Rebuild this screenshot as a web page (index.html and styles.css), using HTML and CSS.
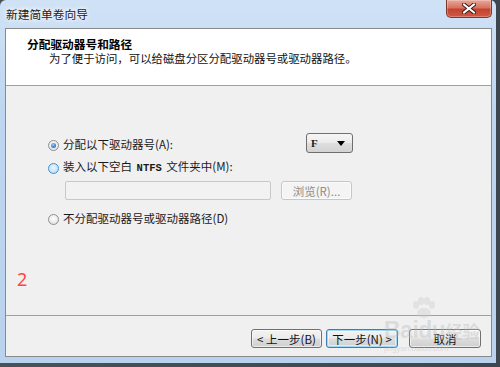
FILE: index.html
```html
<!DOCTYPE html>
<html lang="zh-CN">
<head>
<meta charset="utf-8">
<title>新建简单卷向导</title>
<link rel="stylesheet" href="styles.css">
</head>
<body>
<div class="window">
  <div class="titlebar">
    <span class="title">新建简单卷向导</span>
    <div class="close">
      <svg width="14" height="11" viewBox="0 0 14 11">
        <path d="M2 1.5 L12 9.5 M12 1.5 L2 9.5" stroke="#3a1b17" stroke-width="4" stroke-linecap="square"/>
        <path d="M2 1.5 L12 9.5 M12 1.5 L2 9.5" stroke="#ffffff" stroke-width="2" stroke-linecap="square"/>
      </svg>
    </div>
  </div>
  <div class="client">
    <div class="header">
      <div class="h-title">分配驱动器号和路径</div>
      <div class="h-sub">为了便于访问，可以给磁盘分区分配驱动器号或驱动器路径。</div>
    </div>
    <div class="body">
      <div class="row row1">
        <span class="radio checked"></span>
        <span class="label wide">分配以下驱动器号(A):</span>
        <div class="combo">
          <span class="combo-val">F</span>
          <svg width="8" height="5" viewBox="0 0 8 5"><path d="M0 0 H8 L4 5 Z" fill="#000"/></svg>
        </div>
      </div>
      <div class="row row2">
        <span class="radio hover"></span>
        <span class="label">装入以下空白 <span class="mono">NTFS</span> 文件夹中(M):</span>
      </div>
      <div class="row row-path">
        <div class="textbox"></div>
        <div class="btn disabled">浏览(R)...</div>
      </div>
      <div class="row row3">
        <span class="radio"></span>
        <span class="label">不分配驱动器号或驱动器路径(D)</span>
      </div>
      <div class="step">2</div>
    </div>
    <div class="footer">
      <div class="btn">&lt; 上一步(B)</div>
      <div class="btn focus">下一步(N) &gt;</div>
      <div class="btn cancel">取消</div>
    </div>
    <div class="watermark">
      <svg class="paw" width="26" height="22" viewBox="0 0 26 22">
        <g fill="rgba(200,200,200,0.35)">
          <ellipse cx="6" cy="8" rx="3" ry="4"/>
          <ellipse cx="11" cy="4" rx="3" ry="4"/>
          <ellipse cx="17" cy="4" rx="3" ry="4"/>
          <ellipse cx="22" cy="8" rx="3" ry="4"/>
          <ellipse cx="14" cy="16" rx="7" ry="5"/>
        </g>
      </svg>
      <div class="wm-line"><span class="wm-main">Baidu</span><span class="wm-cn">经验</span></div>
      <span class="wm-url">jingyan.baidu.com</span>
    </div>
  </div>
</div>
</body>
</html>
```

FILE: styles.css
```css
* { box-sizing: border-box; }

html, body {
  margin: 0;
  padding: 0;
}

body {
  width: 500px;
  height: 367px;
  overflow: hidden;
  background: linear-gradient(90deg, #4b5158 0%, #3e4650 100%);
  font-family: "Noto Sans CJK SC", "Noto Sans", sans-serif;
  font-size: 11.5px;
  color: #1a1a1a;
}

.window {
  width: 496px;
  height: 363px;
  display: flex;
  flex-direction: column;
  background: linear-gradient(180deg, #d0e2f6 0%, #bed6f0 30%, #b9d2ee 100%);
  border-radius: 6px 6px 0 0;
  position: relative;
}

.titlebar {
  height: 28px;
  display: flex;
  align-items: flex-start;
  justify-content: space-between;
  padding-left: 6px;
}

.title {
  margin-top: 6px;
  font-size: 11.7px;
  line-height: 16px;
  color: #1c1c1c;
  text-shadow: 0 0 4px #ffffff, 0 0 6px #ffffff;
}

.close {
  width: 46px;
  height: 18px;
  margin-right: 4px;
  border: 1px solid #7a3a30;
  border-top: none;
  border-radius: 0 0 5px 5px;
  background: linear-gradient(180deg, #e9a89a 0%, #d8735f 45%, #c4432f 55%, #cf5a44 100%);
  display: flex;
  align-items: center;
  justify-content: center;
  box-shadow: inset 0 0 0 1px rgba(255, 255, 255, 0.25);
}

.client {
  flex: 1;
  margin: 0 4px 6px 5px;
  border: 1px solid #8a8a8a;
  background: #f0f0f0;
  display: flex;
  flex-direction: column;
  position: relative;
}

.header {
  height: 57px;
  background: #ffffff;
  border-bottom: 1px solid #a0a0a0;
  padding: 8px 0 0 21px;
}

.h-title {
  font-weight: bold;
  line-height: 14px;
  font-size: 11.7px;
  color: #000;
}

.h-sub {
  line-height: 14px;
  margin-left: 22px;
  font-size: 11.4px;
  color: #111;
}

.body {
  flex: 1;
  padding-top: 48px;
  display: flex;
  flex-direction: column;
}

.row {
  display: flex;
  align-items: center;
  margin-left: 42px;
  height: 20px;
}

.row2 { margin-top: 3px; }
.row-path { margin-top: 4px; margin-left: 59px; height: 19px; }
.row3 { margin-top: 8px; }

.radio {
  width: 11px;
  height: 11px;
  border-radius: 50%;
  border: 1px solid #8e9194;
  background: radial-gradient(circle at 50% 40%, #ffffff 0%, #eeeeee 50%, #d6d6d6 100%);
  margin-right: 4px;
  margin-top: 2px;
  display: flex;
  align-items: center;
  justify-content: center;
  flex: none;
}

.radio.checked::after {
  content: "";
  width: 5px;
  height: 5px;
  border-radius: 50%;
  background: radial-gradient(circle at 40% 35%, #9ad0f6 0%, #2d72c4 70%, #1f4f9a 100%);
}

.radio.hover {
  border-color: #4b8fc6;
  background: radial-gradient(circle at 50% 40%, #eaf6fe 0%, #c7e5fa 60%, #a9d3f3 100%);
}

.label {
  line-height: 14px;
  white-space: nowrap;
  color: #1a1a1a;
}

.label.wide {
  width: 243px;
}

.mono {
  font-family: "Liberation Mono", monospace;
  font-weight: bold;
  font-size: 10.5px;
  margin: 0 2px;
}

.combo {
  width: 47px;
  height: 20px;
  margin-top: -2px;
  border: 1px solid #6f6f6f;
  border-radius: 3px;
  background: linear-gradient(180deg, #f6f6f6 0%, #ebebeb 48%, #dedede 52%, #d3d3d3 100%);
  display: flex;
  align-items: center;
  justify-content: space-between;
  padding: 0 7px 0 4px;
}

.combo-val {
  font-family: "Liberation Serif", serif;
  font-weight: bold;
  font-size: 11px;
  line-height: 12px;
}

.textbox {
  width: 206px;
  height: 19px;
  border: 1px solid #c8c8c8;
  border-radius: 2px;
  background: #f2f2f2;
}

.btn {
  height: 19px;
  border: 1px solid #707070;
  border-radius: 3px;
  background: linear-gradient(180deg, #f3f3f3 0%, #ebebeb 48%, #dddddd 52%, #cfcfcf 100%);
  display: flex;
  align-items: center;
  justify-content: center;
  white-space: nowrap;
  line-height: 14px;
  color: #111;
  box-shadow: inset 0 0 0 1px rgba(255, 255, 255, 0.6);
}

.btn.disabled {
  width: 71px;
  margin-left: 10px;
  border-color: #c6c6c6;
  background: #f4f4f4;
  color: #8d8d8d;
}

.step {
  margin: 40px 0 0 11px;
  font-family: "Noto Sans", sans-serif;
  font-size: 18px;
  line-height: 22px;
  color: #ff4545;
}

.footer {
  height: 41px;
  border-top: 1px solid #a0a0a0;
  display: flex;
  justify-content: flex-end;
  align-items: flex-start;
  padding: 13px 10px 0 0;
}

.footer .btn {
  width: 71px;
}

.footer .btn + .btn {
  margin-left: 4px;
}

.footer .btn.focus {
  width: 72px;
  border-color: #3c7fb1;
  box-shadow: inset 0 0 0 1px #9fd8f8, inset 0 0 0 2px rgba(255, 255, 255, 0.5);
}

.footer .btn.cancel {
  width: 72px;
  margin-left: 11px;
}

.watermark {
  position: absolute;
  left: 378px;
  top: 268px;
  width: 105px;
  pointer-events: none;
  color: rgba(185, 185, 185, 0.4);
  line-height: 1;
  display: flex;
  flex-direction: column;
  align-items: flex-start;
}

.paw {
  margin-left: 26px;
}

.wm-main {
  font-family: "Liberation Sans", sans-serif;
  font-weight: bold;
  font-size: 23px;
  letter-spacing: -0.5px;
}

.wm-cn {
  font-size: 17px;
  font-weight: bold;
}

.wm-url {
  font-family: "Liberation Sans", sans-serif;
  font-size: 8px;
  margin-top: 3px;
}
```
